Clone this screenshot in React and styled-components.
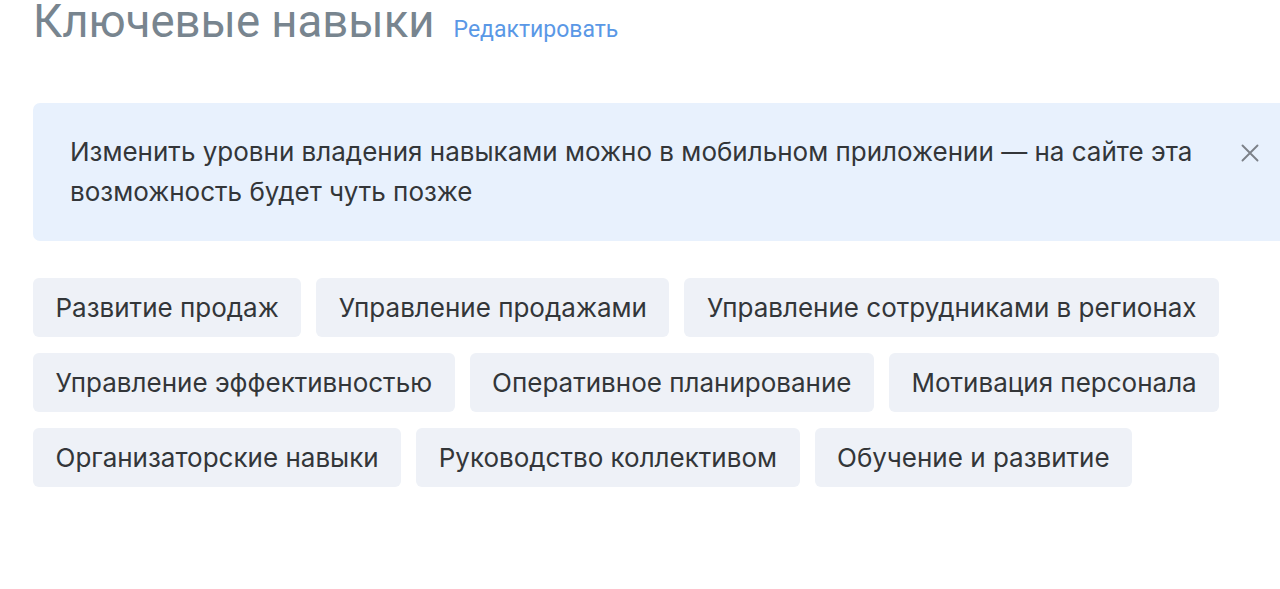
import React from "react";
import styled, { createGlobalStyle } from "styled-components";

const GlobalStyle = createGlobalStyle`
  html, body {
    margin: 0;
    padding: 0;
    background: #ffffff;
    overflow: hidden;
  }
  body {
    font-family: Inter, "Noto Sans", sans-serif;
    -webkit-font-smoothing: antialiased;
  }
`;

const Page = styled.div`
  width: 1300px;
  padding: 0 0 0 33px;
  box-sizing: border-box;
`;

const Header = styled.div`
  display: flex;
  align-items: baseline;
  gap: 19px;
  height: 43px;
`;

const Title = styled.h2`
  margin: 0;
  font-family: Roboto, "Liberation Sans", sans-serif;
  font-weight: 400;
  font-size: 45.5px;
  line-height: 43px;
  color: #78858f;
`;

const EditLink = styled.a`
  font-family: Roboto, "Liberation Sans", sans-serif;
  font-size: 23px;
  line-height: 28px;
  color: #5a98e6;
  text-decoration: none;
  cursor: pointer;
`;

const Notice = styled.div`
  margin-top: 60px;
  display: flex;
  align-items: flex-start;
  background: #e8f1fd;
  border-radius: 7px;
  padding: 29px 30px 29px 37px;
`;

const NoticeText = styled.p`
  margin: 0;
  width: 1150px;
  font-size: 26px;
  line-height: 40px;
  color: #333639;
`;

const CloseButton = styled.button`
  margin: 11px 0 0 20px;
  padding: 0;
  width: 20px;
  height: 20px;
  border: 0;
  background: none;
  color: #7c8188;
  cursor: pointer;
  display: flex;
`;

const Tags = styled.div`
  margin-top: 37px;
  display: flex;
  flex-wrap: wrap;
  gap: 16px 15px;
  width: 1230px;
`;

const Tag = styled.span`
  display: inline-flex;
  align-items: center;
  height: 59px;
  padding: 0 22.5px;
  box-sizing: border-box;
  border-radius: 6px;
  background: #eef1f7;
  font-size: 26px;
  color: #333639;
  white-space: nowrap;
`;

const skills = [
  "Развитие продаж",
  "Управление продажами",
  "Управление сотрудниками в регионах",
  "Управление эффективностью",
  "Оперативное планирование",
  "Мотивация персонала",
  "Организаторские навыки",
  "Руководство коллективом",
  "Обучение и развитие",
];

export default function App() {
  return (
    <>
      <GlobalStyle />
      <Page>
        <Header>
          <Title>Ключевые навыки</Title>
          <EditLink>Редактировать</EditLink>
        </Header>
        <Notice>
          <NoticeText>
            Изменить уровни владения навыками можно в мобильном приложении — на
            сайте эта возможность будет чуть позже
          </NoticeText>
          <CloseButton aria-label="Закрыть">
            <svg width="20" height="20" viewBox="0 0 20 20" fill="none">
              <path
                d="M2.5 2.5L17.5 17.5M17.5 2.5L2.5 17.5"
                stroke="currentColor"
                strokeWidth="1.9"
                strokeLinecap="round"
              />
            </svg>
          </CloseButton>
        </Notice>
        <Tags>
          {skills.map((s) => (
            <Tag key={s}>{s}</Tag>
          ))}
        </Tags>
      </Page>
    </>
  );
}
